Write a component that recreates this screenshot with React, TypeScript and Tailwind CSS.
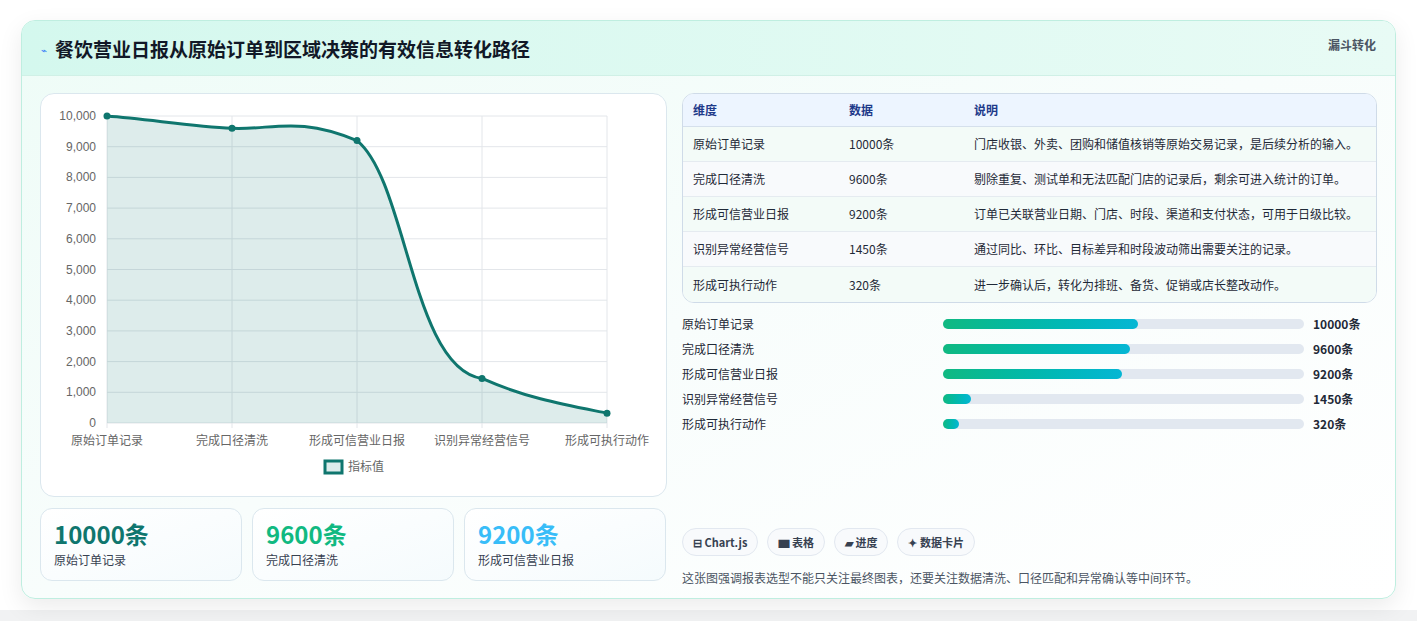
import React from "react";

const rows = [
  ["原始订单记录", 10000, "门店收银、外卖、团购和储值核销等原始交易记录，是后续分析的输入。"],
  ["完成口径清洗", 9600, "剔除重复、测试单和无法匹配门店的记录后，剩余可进入统计的订单。"],
  ["形成可信营业日报", 9200, "订单已关联营业日期、门店、时段、渠道和支付状态，可用于日级比较。"],
  ["识别异常经营信号", 1450, "通过同比、环比、目标差异和时段波动筛出需要关注的记录。"],
  ["形成可执行动作", 320, "进一步确认后，转化为排班、备货、促销或店长整改动作。"],
] as const;

function Chart() {
  const x0 = 66, x1 = 566, yT = 22, yB = 329;
  const xs = [0, 1, 2, 3, 4].map((i) => x0 + (i * (x1 - x0)) / 4);
  const y = (v: number) => yB - (v / 10000) * (yB - yT);
  const vals = [10000, 9600, 9200, 1450, 320];
  const pts = vals.map((v, i) => [xs[i], y(v)]);
  const line = `M${pts[0][0]},${pts[0][1]} C${pts[0][0] + 40},${pts[0][1] + 3} ${pts[1][0] - 40},${pts[1][1] - 2} ${pts[1][0]},${pts[1][1]} C${pts[1][0] + 40},${pts[1][1] + 2} ${pts[2][0] - 60},${pts[2][1] - 25} ${pts[2][0]},${pts[2][1]} C${pts[2][0] + 50},${pts[2][1] + 40} ${pts[3][0] - 70},${pts[3][1] - 10} ${pts[3][0]},${pts[3][1]} C${pts[3][0] + 45},${pts[3][1] + 20} ${pts[4][0] - 40},${pts[4][1] - 8} ${pts[4][0]},${pts[4][1]}`;
  const labels = ["原始订单记录", "完成口径清洗", "形成可信营业日报", "识别异常经营信号", "形成可执行动作"];
  return (
    <svg width="627" height="403" style={{ fontFamily: "'Liberation Sans','Noto Sans CJK SC',sans-serif" }}>
      {Array.from({ length: 11 }).map((_, i) => {
        const v = i * 1000;
        return (
          <g key={i}>
            <line x1={x0} x2={x1} y1={y(v)} y2={y(v)} stroke="#e3e6ea" />
            <text x={x0 - 11} y={y(v) + 4} textAnchor="end" fontSize="12" fill="#666">{v.toLocaleString("en-US")}</text>
          </g>
        );
      })}
      {xs.map((x, i) => (
        <g key={i}>
          <line x1={x} x2={x} y1={yT} y2={yB + 5} stroke="#e3e6ea" />
          <text x={x} y={yB + 22} textAnchor="middle" fontSize="12" fill="#666">{labels[i]}</text>
        </g>
      ))}
      <path d={`${line} L${x1},${yB} L${x0},${yB} Z`} fill="rgba(15,118,110,0.14)" />
      <path d={line} fill="none" stroke="#0f766e" strokeWidth="3" />
      {pts.map((p, i) => (
        <circle key={i} cx={p[0]} cy={p[1]} r="3.5" fill="#0f766e" />
      ))}
      <rect x={284} y={367} width={17} height={12} fill="rgba(15,118,110,0.14)" stroke="#0f766e" strokeWidth="3" />
      <text x={307} y={377} fontSize="12" fill="#666">指标值</text>
    </svg>
  );
}

export default function App() {
  return (
    <div className="w-[1417px] h-[621px] bg-[#f1f2f3] relative" style={{ fontFamily: "'Noto Sans CJK SC',sans-serif" }}>
      <div className="bg-white h-[610px] pt-[20px] px-[21px]">
        <div className="w-[1375px] h-[579px] rounded-[14px] border border-[#bfeee0] shadow-[0_8px_24px_rgba(0,0,0,0.08)] bg-gradient-to-br from-[#eefcf7] via-[#f8fdfc] to-white overflow-hidden">
          <div className="h-[55px] bg-gradient-to-r from-[#d4f8ee] to-[#e8fbf5] border-b border-[#d0f0e6] flex items-start justify-between px-[19px]">
            <div className="flex items-center gap-[8px] mt-[14px]">
              <span className="text-[#3b82f6] text-[10px]">⌁</span>
              <span className="text-[19px] font-bold text-[#111827]">餐饮营业日报从原始订单到区域决策的有效信息转化路径</span>
            </div>
            <span className="text-[12px] font-bold text-[#4b5563] mt-[15px]">漏斗转化</span>
          </div>
          <div className="flex gap-[15px] px-[18px] pt-[17px]">
            <div className="w-[627px] flex flex-col gap-[11px]">
              <div className="h-[404px] rounded-[14px] border border-[#dbe7ee] bg-white overflow-hidden">
                <Chart />
              </div>
              <div className="flex gap-[10px]">
                {[
                  ["10000条", "text-[#0f766e]", "原始订单记录"],
                  ["9600条", "text-[#10b981]", "完成口径清洗"],
                  ["9200条", "text-[#38bdf8]", "形成可信营业日报"],
                ].map(([v, c, l]) => (
                  <div key={l} className="w-[202px] h-[73px] rounded-[12px] border border-[#dbe7ee] bg-gradient-to-br from-white to-[#f5fbfd] px-[13px] pt-[10px]">
                    <div className={`text-[24px] font-bold leading-[30px] ${c}`}>{v}</div>
                    <div className="text-[12px] text-[#374151] mt-[2px]">{l}</div>
                  </div>
                ))}
              </div>
            </div>
            <div className="w-[696px] flex flex-col">
              <div className="rounded-[12px] border border-[#cfdbe8] overflow-hidden bg-white text-[12px]">
                <div className="flex h-[33px] items-center bg-[#edf5ff] border-b border-[#d5e0ec] text-[#1e3a8a] font-bold">
                  <div className="w-[166px] pl-[10px]">维度</div>
                  <div className="w-[125px]">数据</div>
                  <div>说明</div>
                </div>
                {rows.map(([a, b, c], i) => (
                  <div key={a} className={`flex h-[35px] items-center text-[#1f2937] ${i < 4 ? "border-b border-[#e5ebf0]" : ""} ${i % 2 ? "bg-[#f8fafc]" : "bg-[#f3fbf8]"}`}>
                    <div className="w-[166px] pl-[10px]">{a}</div>
                    <div className="w-[125px]">{b}条</div>
                    <div>{c}</div>
                  </div>
                ))}
              </div>
              <div className="flex flex-col mt-[8px]">
                {rows.map(([a, b]) => (
                  <div key={a} className="flex items-center h-[25px] text-[12px] text-[#1f2937]">
                    <div className="w-[261px]">{a}</div>
                    <div className="w-[361px] h-[10px] rounded-full bg-[#e2e8f0]">
                      <div className="h-full rounded-full bg-gradient-to-r from-[#10b981] to-[#06b6d4]" style={{ width: `${Math.max((b / 10000) * 54, 4.4)}%` }} />
                    </div>
                    <div className="ml-[9px] font-bold text-[#1f2937]">{b}条</div>
                  </div>
                ))}
              </div>
              <div className="flex gap-[9px] mt-[92px]">
                {["⊟ Chart.js", "▆ 表格", "▰ 进度", "✦ 数据卡片"].map((t) => (
                  <span key={t} className="h-[28px] px-[10px] rounded-full border border-[#e2e8f0] bg-[#f8fafc] text-[11px] font-bold text-[#374151] flex items-center">{t}</span>
                ))}
              </div>
              <div className="mt-[13px] text-[12px] text-[#4b5563]">这张图强调报表选型不能只关注最终图表，还要关注数据清洗、口径匹配和异常确认等中间环节。</div>
            </div>
          </div>
        </div>
      </div>
    </div>
  );
}
